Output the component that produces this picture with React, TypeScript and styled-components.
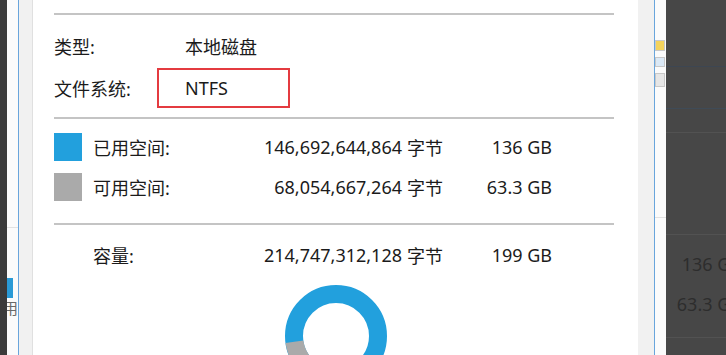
import React from 'react';
import styled, { createGlobalStyle } from 'styled-components';

const GlobalStyle = createGlobalStyle`
  html, body {
    margin: 0;
    padding: 0;
    background: #ffffff;
    overflow: hidden;
  }
  body {
    font-family: 'Noto Sans', 'Noto Sans CJK SC', sans-serif;
    color: #1b1b1b;
  }
  * {
    box-sizing: border-box;
  }
`;

const Page = styled.div`
  display: flex;
  width: 726px;
  height: 355px;
  overflow: hidden;
`;

const DarkEdge = styled.div`
  width: 7px;
  flex-shrink: 0;
  background: #3b3b3b;
`;

const BehindStrip = styled.div<{ $width: number }>`
  width: ${(p) => p.$width}px;
  flex-shrink: 0;
  background: #fbfbfb;
  display: flex;
  flex-direction: column;
  overflow: hidden;
`;

const StripLine = styled.div<{ $top: number }>`
  margin-top: ${(p) => p.$top}px;
  height: 1px;
  background: #e2e2e2;
`;

const StripBar = styled.div<{ $top: number; $width: number; $height: number; $color: string }>`
  margin-top: ${(p) => p.$top}px;
  width: ${(p) => p.$width}px;
  height: ${(p) => p.$height}px;
  background: ${(p) => p.$color};
`;

const StripText = styled.div`
  display: flex;
  justify-content: flex-end;
  font-size: 15px;
  line-height: 20px;
  color: #6a6a6a;
  white-space: nowrap;
`;

const Dialog = styled.div`
  width: 637px;
  flex-shrink: 0;
  border-left: 1px solid #69a5dc;
  border-right: 1px solid #69a5dc;
  background: #f1f1f1;
  padding: 0 16px 0 13px;
  display: flex;
`;

const Panel = styled.div`
  flex: 1;
  background: #ffffff;
  border-left: 1px solid #e0e0e0;
  padding: 13px 24px 0 21px;
  display: flex;
  flex-direction: column;
  font-size: 18px;
`;

const Separator = styled.div<{ $top?: number }>`
  margin-top: ${(p) => p.$top || 0}px;
  height: 2px;
  background: #c4c4c4;
  flex-shrink: 0;
`;

const InfoRow = styled.div<{ $top: number }>`
  margin-top: ${(p) => p.$top}px;
  height: 40px;
  display: flex;
  align-items: center;
  flex-shrink: 0;
`;

const InfoLabel = styled.div`
  width: 103px;
`;

const ValueBox = styled.div<{ $highlight?: boolean }>`
  width: 133px;
  height: 40px;
  border: 2px solid ${(p) => (p.$highlight ? '#e43b40' : 'transparent')};
  padding-left: 26px;
  display: flex;
  align-items: center;
`;

const UsageRow = styled.div<{ $top: number }>`
  margin-top: ${(p) => p.$top}px;
  height: 28px;
  display: flex;
  align-items: center;
  flex-shrink: 0;
  white-space: nowrap;
`;

const Swatch = styled.div<{ $color?: string }>`
  width: 28px;
  height: 28px;
  margin-right: 11px;
  background: ${(p) => p.$color || 'transparent'};
`;

const UsageLabel = styled.div`
  width: 130px;
`;

const Bytes = styled.div`
  width: 179px;
  text-align: right;
`;

const Unit = styled.div`
  width: 36px;
  margin-left: 5px;
`;

const Size = styled.div`
  width: 109px;
  text-align: right;
`;

const DonutWrap = styled.div`
  margin-top: 16px;
  display: flex;
  justify-content: center;
  padding-left: 4px;
`;

const DimWindow = styled.div`
  flex: 1;
  background: #474747;
  display: flex;
  flex-direction: column;
  overflow: hidden;
`;

const DimRow = styled.div<{ $height: number; $line: string }>`
  height: ${(p) => p.$height}px;
  border-bottom: 1px solid ${(p) => p.$line};
  flex-shrink: 0;
`;

const DimText = styled.div<{ $top: number }>`
  margin-top: ${(p) => p.$top}px;
  width: 76px;
  flex-shrink: 0;
  text-align: right;
  font-size: 18px;
  line-height: 24px;
  color: #2d2d2d;
  white-space: nowrap;
`;

const MiniIcon = styled.div<{ $top: number; $color: string; $height: number }>`
  margin-top: ${(p) => p.$top}px;
  width: 10px;
  height: ${(p) => p.$height}px;
  background: ${(p) => p.$color};
  border: 1px solid #c8c8c8;
`;

const usage = [
  { label: '已用空间:', bytes: '146,692,644,864', size: '136 GB', color: '#22a0dd', top: 14 },
  { label: '可用空间:', bytes: '68,054,667,264', size: '63.3 GB', color: '#aaaaaa', top: 12 },
];

function Donut() {
  return (
    <svg width="102" height="102" viewBox="0 0 102 102">
      <circle cx="51" cy="51" r="42" fill="none" stroke="#22a0dd" strokeWidth="18" />
      <path d="M 73.26 86.62 A 42 42 0 0 1 9.41 56.85" fill="none" stroke="#aaaaaa" strokeWidth="18" />
    </svg>
  );
}

export default function App() {
  return (
    <Page>
      <GlobalStyle />
      <DarkEdge />
      <BehindStrip $width={11}>
        <StripLine $top={227} />
        <StripBar $top={50} $width={6} $height={20} $color="#2a9ad6" />
        <StripText>可用</StripText>
      </BehindStrip>
      <Dialog>
        <Panel>
          <Separator />
          <InfoRow $top={11}>
            <InfoLabel>类型:</InfoLabel>
            <ValueBox>本地磁盘</ValueBox>
          </InfoRow>
          <InfoRow $top={2}>
            <InfoLabel>文件系统:</InfoLabel>
            <ValueBox $highlight>NTFS</ValueBox>
          </InfoRow>
          <Separator $top={9} />
          {usage.map((u) => (
            <UsageRow key={u.label} $top={u.top}>
              <Swatch $color={u.color} />
              <UsageLabel>{u.label}</UsageLabel>
              <Bytes>{u.bytes}</Bytes>
              <Unit>字节</Unit>
              <Size>{u.size}</Size>
            </UsageRow>
          ))}
          <Separator $top={22} />
          <UsageRow $top={16}>
            <Swatch />
            <UsageLabel>容量:</UsageLabel>
            <Bytes>214,747,312,128</Bytes>
            <Unit>字节</Unit>
            <Size>199 GB</Size>
          </UsageRow>
          <DonutWrap>
            <Donut />
          </DonutWrap>
        </Panel>
      </Dialog>
      <BehindStrip $width={11}>
        <MiniIcon $top={40} $color="#f3d35c" $height={11} />
        <MiniIcon $top={6} $color="#dbe9f6" $height={10} />
        <MiniIcon $top={6} $color="#e6e6e6" $height={14} />
        <StripLine $top={130} />
      </BehindStrip>
      <DimWindow>
        <DimRow $height={67} $line="#3d4652" />
        <DimRow $height={42} $line="#3f4b57" />
        <DimRow $height={24} $line="#525252" />
        <DimRow $height={102} $line="#525252" />
        <DimText $top={17}>136 GB</DimText>
        <DimText $top={16}>63.3 GB</DimText>
        <DimRow $height={22} $line="#525252" />
      </DimWindow>
    </Page>
  );
}
